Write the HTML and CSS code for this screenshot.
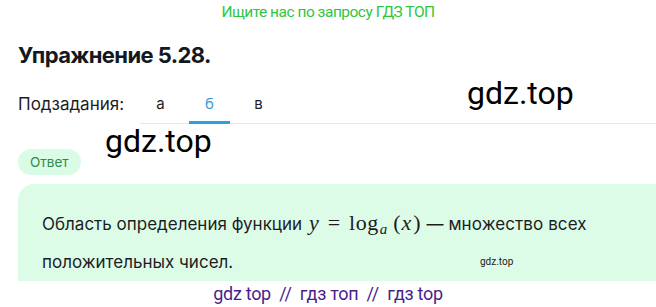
FILE: index.html
```html
<!DOCTYPE html>
<html lang="ru">
<head>
<meta charset="utf-8">
<link rel="stylesheet" href="styles.css">
</head>
<body>
<div class="page">
  <div class="banner">Ищите нас по запросу ГДЗ ТОП</div>
  <h1 class="title">Упражнение 5.28.</h1>
  <div class="subtasks">
    <span class="sub-label">Подзадания:</span>
    <div class="tabs">
      <span class="tab">а</span>
      <span class="tab active">б</span>
      <span class="tab">в</span>
    </div>
  </div>
  <div class="answer-row"><span class="pill">Ответ</span></div>
  <div class="answer">
    <p class="answer-text"><span>Область определения функции</span> <span class="math"><i>y</i><span class="op">=</span><span class="fn">log</span><sub><i>a</i></sub><span class="paren">(<i class="px">x</i>)</span></span> <span class="tail">— множество всех</span><br><span>положительных чисел.</span></p>
    <span class="wm-small">gdz.top</span>
  </div>
  <div class="footer">gdz top &nbsp;//&nbsp; гдз топ &nbsp;//&nbsp; гдз top</div>
  <span class="wm wm-1">gdz.top</span>
  <span class="wm wm-2">gdz.top</span>
</div>
</body>
</html>
```

FILE: styles.css
```css
html, body {
  margin: 0;
  padding: 0;
  background: #ffffff;
}
.page {
  position: relative;
  width: 656px;
  height: 307px;
  overflow: hidden;
  font-family: Inter, "Noto Sans", sans-serif;
  color: #1d1d1f;
}
.banner {
  height: 25px;
  line-height: 25px;
  text-align: center;
  font-family: Roboto, sans-serif;
  font-size: 15.5px;
  letter-spacing: -0.5px;
  color: #2fc53f;
}
.title {
  margin: 16px 0 0 18px;
  font-family: Inter, sans-serif;
  font-size: 22px;
  font-weight: 700;
  letter-spacing: -0.6px;
  line-height: 28px;
  color: #141820;
}
.subtasks {
  display: flex;
  align-items: stretch;
  margin-top: 15px;
  padding-left: 18px;
  height: 40px;
}
.sub-label {
  font-size: 17px;
  line-height: 41px;
  color: #1d1d1f;
  width: 122px;
  letter-spacing: 0;
}
.tabs {
  flex: 1;
  display: flex;
  border-bottom: 1px solid #e6e6e6;
  height: 40px;
  box-sizing: border-box;
}
.tab {
  width: 41px;
  margin-right: 8px;
  text-align: center;
  font-size: 15px;
  line-height: 40px;
  color: #1d1d1f;
  height: 39px;
  box-sizing: border-box;
}
.tab.active {
  color: #3a9ad6;
  border-bottom: 3px solid #2aa3dd;
  height: 40px;
  margin-bottom: -1px;
  line-height: 40px;
}
.answer-row {
  padding-left: 18px;
  margin-top: 25px;
  height: 26px;
}
.pill {
  display: inline-block;
  height: 26px;
  line-height: 26px;
  padding: 0 12px;
  border-radius: 13px;
  background: #dafbe6;
  color: #2f8a4e;
  font-size: 13.5px;
}
.answer {
  position: relative;
  margin: 9px 0 0 18px;
  background: #dcfce8;
  border-radius: 16px 0 0 0;
  height: 97px;
  box-sizing: border-box;
  padding: 21px 0 0 24px;
}
.answer-text {
  margin: 0;
  font-size: 17px;
  line-height: 38px;
  color: #1d1d1f;
  letter-spacing: 0;
  white-space: nowrap;
}
.answer-text .tail {
  letter-spacing: 0.1px;
}
.math {
  font-family: "Liberation Serif", serif;
  font-size: 22px;
  line-height: 20px;
  display: inline-block;
  vertical-align: baseline;
  margin-left: 2px;
  margin-right: 1px;
}
.math i {
  font-style: italic;
}
.math .op {
  margin: 0 9px;
}
.math .fn {
  letter-spacing: 0.5px;
}
.math sub {
  font-size: 15px;
  vertical-align: -4px;
  line-height: 0;
  margin-left: 1px;
}
.math .paren {
  margin-left: 6px;
}
.math .px {
  padding: 0 2px 0 1px;
}
.wm-small {
  position: absolute;
  left: 462px;
  top: 72px;
  font-family: Roboto, sans-serif;
  font-size: 10px;
  color: #222;
}
.footer {
  margin-top: 2px;
  text-align: center;
  font-family: Roboto, sans-serif;
  font-size: 18px;
  color: #4a1f8c;
  letter-spacing: -0.3px;
}
.wm {
  position: absolute;
  font-family: Roboto, sans-serif;
  font-size: 32px;
  color: #000;
  line-height: 1;
}
.wm-1 {
  left: 467px;
  top: 77px;
}
.wm-2 {
  left: 105px;
  top: 125px;
}
```
